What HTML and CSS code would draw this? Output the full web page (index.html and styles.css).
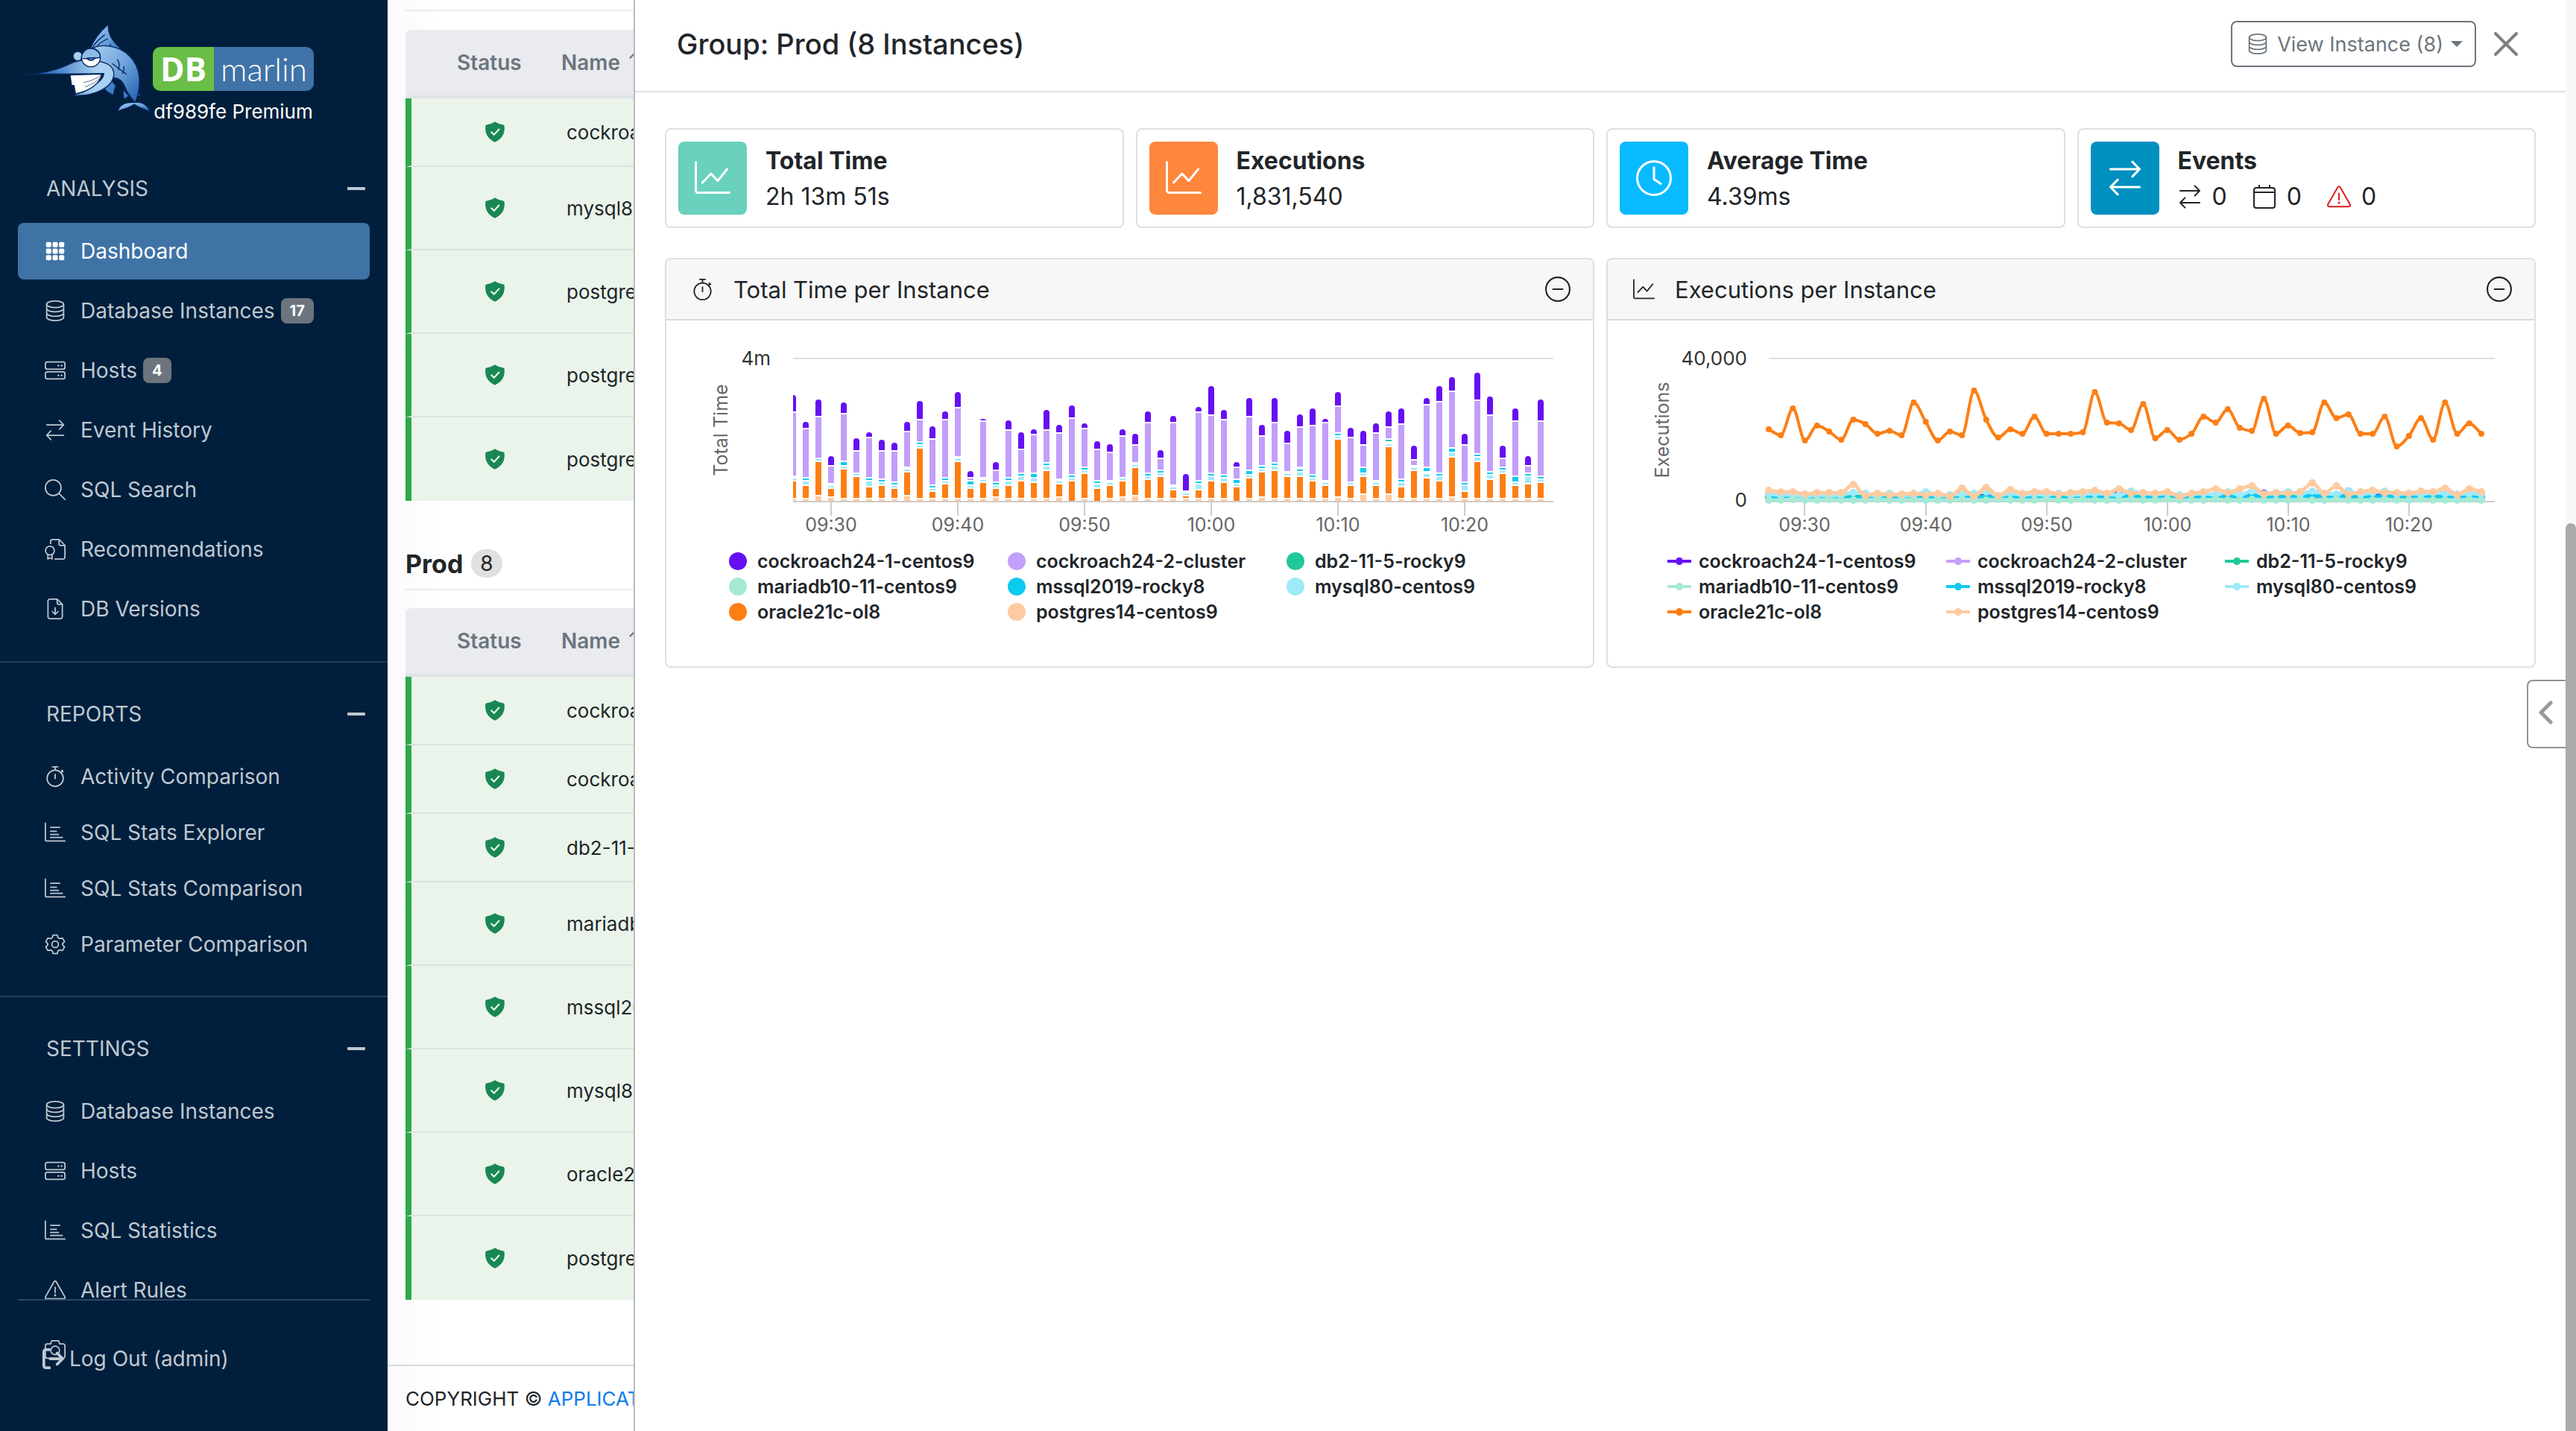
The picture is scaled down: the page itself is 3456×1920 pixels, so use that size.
FILE: index.html
```html
<!DOCTYPE html>
<html lang="en">
<head>
<meta charset="utf-8">
<title>DBmarlin - Dashboard</title>
<link rel="stylesheet" href="styles.css">
</head>
<body>
<svg class="sprite" aria-hidden="true">
  <symbol id="i-grid" viewBox="0 0 16 16"><g fill="currentColor"><rect x="1" y="1" width="4" height="4" rx="1"/><rect x="6" y="1" width="4" height="4" rx="1"/><rect x="11" y="1" width="4" height="4" rx="1"/><rect x="1" y="6" width="4" height="4" rx="1"/><rect x="6" y="6" width="4" height="4" rx="1"/><rect x="11" y="6" width="4" height="4" rx="1"/><rect x="1" y="11" width="4" height="4" rx="1"/><rect x="6" y="11" width="4" height="4" rx="1"/><rect x="11" y="11" width="4" height="4" rx="1"/></g></symbol>
  <symbol id="i-db" viewBox="0 0 16 16"><g fill="none" stroke="currentColor"><ellipse cx="8" cy="3" rx="6.5" ry="2.5"/><path d="M1.500 3v10c0 1.400 2.900 2.500 6.500 2.500s6.500-1.100 6.500-2.500V3M1.500 6.300C1.500 7.700 4.400 8.800 8 8.800s6.500-1.100 6.500-2.500M1.500 9.700c0 1.400 2.900 2.500 6.500 2.500s6.500-1.100 6.500-2.500"/></g></symbol>
  <symbol id="i-host" viewBox="0 0 16 16"><g fill="none" stroke="currentColor"><rect x=".5" y="1.500" width="15" height="5.500" rx="1.500"/><rect x=".5" y="9" width="15" height="5.500" rx="1.500"/></g><g fill="currentColor"><circle cx="10.500" cy="4.300" r=".7"/><circle cx="13" cy="4.300" r=".7"/><circle cx="10.500" cy="11.800" r=".7"/><circle cx="13" cy="11.800" r=".7"/></g></symbol>
  <symbol id="i-swap" viewBox="0 0 16 16"><path d="M1.500 4h13M11.300.700L14.500 4l-3.200 3.300M14.500 12h-13M4.700 8.700L1.500 12l3.200 3.300" fill="none" stroke="currentColor" stroke-linecap="round" stroke-linejoin="round"/></symbol>
  <symbol id="i-search" viewBox="0 0 16 16"><g fill="none" stroke="currentColor" stroke-linecap="round"><circle cx="6.500" cy="6.500" r="6"/><path d="M11 11l4.500 4.500"/></g></symbol>
  <symbol id="i-award" viewBox="0 0 16 16"><g fill="none" stroke="currentColor" stroke-linejoin="round"><path d="M4.500 4V2A1.500 1.500 0 0 1 6 .5h5l4.500 4.500v9a1.500 1.500 0 0 1-1.500 1.500H7.500"/><path d="M11 .5V4a1 1 0 0 0 1 1h3.500"/><circle cx="4" cy="9" r="3.400"/><path d="M2.400 12v3.500L4 14.500l1.600 1V12"/></g></symbol>
  <symbol id="i-file" viewBox="0 0 16 16"><g fill="none" stroke="currentColor" stroke-linecap="round" stroke-linejoin="round"><path d="M9.500.5H4A1.500 1.500 0 0 0 2.500 2v12A1.500 1.500 0 0 0 4 15.500h8a1.500 1.500 0 0 0 1.500-1.500V4.500z"/><path d="M9.500.5V3A1.500 1.500 0 0 0 11 4.500h2.500M8 7v5M5.800 10L8 12.200 10.200 10"/></g></symbol>
  <symbol id="i-watch" viewBox="0 0 16 16"><g fill="none" stroke="currentColor" stroke-linecap="round"><circle cx="8" cy="9.300" r="6.200"/><path d="M6 .5h4M8 .5V3M8 6.200v3.300M13 3.200l1 1M12.300 5l1.400-1.500"/></g></symbol>
  <symbol id="i-bars" viewBox="0 0 16 16"><path d="M.5.8v12.700a1 1 0 0 0 1 1h14M4.500 4h7M4.500 7h4.500M4.500 9.500h6M4.500 11.800h9" fill="none" stroke="currentColor" stroke-linecap="round"/></symbol>
  <symbol id="i-gear" viewBox="0 0 16 16"><g fill="none" stroke="currentColor" stroke-linejoin="round"><circle cx="8" cy="8" r="2.500"/><path d="M6.400.9h3.200l.6 2.100 1.300.7 2.100-.5 1.600 2.700-1.500 1.600v1l1.500 1.600-1.600 2.700-2.100-.5-1.300.7-.6 2.100H6.400l-.6-2.100-1.300-.7-2.100.5-1.600-2.700 1.500-1.600v-1L.8 5.900l1.600-2.700 2.100.5 1.300-.7z"/></g></symbol>
  <symbol id="i-alert" viewBox="0 0 16 16"><path d="M7.100 1.700a1 1 0 0 1 1.800 0l6.500 11.400a1 1 0 0 1-.9 1.500h-13a1 1 0 0 1-.9-1.500zM8 5.800v4.200" fill="none" stroke="currentColor" stroke-linecap="round"/><circle cx="8" cy="12" r=".8" fill="currentColor"/></symbol>
  <symbol id="i-camera" viewBox="0 0 16 16"><g fill="none" stroke="currentColor" stroke-linejoin="round"><path d="M4.500 3.500L5.500 1h5l1 2.500H14A1.500 1.500 0 0 1 15.500 5v8a1.500 1.500 0 0 1-1.500 1.500H2A1.500 1.500 0 0 1 .5 13V5A1.500 1.500 0 0 1 2 3.500z"/><circle cx="8" cy="8.500" r="3.300"/></g></symbol>
  <symbol id="i-logout" viewBox="0 0 16 16"><path d="M5.500 1.500H3A1.500 1.500 0 0 0 1.500 3v10A1.500 1.500 0 0 0 3 14.500h2.500M6 8h9M11 4l4 4-4 4" fill="none" stroke="currentColor" stroke-width="2" stroke-linecap="round" stroke-linejoin="round"/></symbol>
  <symbol id="i-graph" viewBox="0 0 16 16"><path d="M.5.800v12.700a1 1 0 0 0 1 1h14M3.500 10l3.800-4 3 3.200L14.500 4" fill="none" stroke="currentColor" stroke-linecap="round" stroke-linejoin="round"/></symbol>
  <symbol id="i-clock" viewBox="0 0 16 16"><g fill="none" stroke="currentColor" stroke-linecap="round" stroke-linejoin="round"><circle cx="8" cy="8" r="7.500"/><path d="M8 3.200V8.500l3 2"/></g></symbol>
  <symbol id="i-cal" viewBox="0 0 16 16"><g fill="none" stroke="currentColor" stroke-linecap="round"><rect x="1" y="2" width="14" height="13.500" rx="1.500"/><path d="M1 5h14M4.500 0v2M11.500 0v2"/></g></symbol>
  <symbol id="i-minus" viewBox="0 0 16 16"><g fill="none" stroke="currentColor" stroke-linecap="round"><circle cx="8" cy="8" r="7.500"/><path d="M5 8h6"/></g></symbol>
  <symbol id="i-shield" viewBox="0 0 16 16"><path d="M8 .2c2 1.200 4.200 2 6.400 2.400.6.100.9.500.9 1.100.4 5.500-1.700 9.600-7.300 12.100C2.400 13.300.3 9.200.7 3.700c0-.6.300-1 .9-1.100C3.800 2.200 6 1.400 8 .2z" fill="#198754"/><path d="M5.300 8.200l2 2 3.800-4.200" fill="none" stroke="#eef8f0" stroke-width="1.200" stroke-linecap="round" stroke-linejoin="round"/></symbol>
  <symbol id="i-up" viewBox="0 0 16 16"><path d="M5 15V1M1 5l4-4 4 4" fill="none" stroke="currentColor" stroke-width="1.500" stroke-linecap="round"/></symbol>
</svg>

<aside class="sidebar">
  <div class="brand">
    <svg class="fish" viewBox="0 0 555 420" aria-hidden="true">
      <defs>
        <linearGradient id="skin" x1="0" y1="0" x2="1" y2="1"><stop offset="0" stop-color="#a9d0f2"/><stop offset=".5" stop-color="#6fa3dc"/><stop offset="1" stop-color="#1f5fae"/></linearGradient>
        <linearGradient id="snout" x1="0" x2="1"><stop offset="0" stop-color="#06296a"/><stop offset=".35" stop-color="#3a78c4"/><stop offset=".8" stop-color="#a9d0f2"/></linearGradient>
      </defs>
      <g stroke="#06265c" stroke-width="4" stroke-linejoin="round">
        <path d="M303 136C318 98 343 66 376 38c-2 40 14 68 66 112l-40-10z" fill="url(#skin)"/>
        <path d="M312 132q18-30 50-52M328 130q10-18 46-34M380 130l6-12" fill="none"/>
        <path d="M385 258c-4 24-20 26-32 26 8 18 24 32 44 38 2-18 4-26 10-36zM436 300c-2 16 0 28 4 40l18-14zM485 290c4 14 12 26 24 36l-22-2z" fill="#3f80c8"/>
        <path d="M300 140c50-30 120-14 160 24 48 46 52 120 24 190-18-22-34-44-44-70-10-22-30-34-50-30l-60-60z" fill="url(#skin)"/>
        <path d="M414 388c6-26 28-38 66-36 32-4 54 12 64 38-22-12-42-16-64-30-20 14-42 18-66 28z" fill="url(#skin)"/>
        <circle cx="253" cy="166" r="19" fill="#a9d0f2"/>
        <path d="M20 240c70 0 140-14 200-42 40-20 90-20 132-8 30 8 48 24 46 52-4 46-72 88-166 82 18-10 40-8 58-22 34-22 66-40 68-66z" fill="url(#snout)"/>
        <path d="M222 242l128-4c-10 44-54 68-106 80l-6-34h-10z" fill="#fff"/>
        <path d="M276 272q40-6 78-34M282 290q40-14 60-36" fill="none" stroke-width="2"/>
        <path d="M392 196l58 44M412 178q14 20 4 44M438 206q4 16-6 30M396 254l12 8" fill="none"/>
        <circle cx="306" cy="171" r="38" fill="#fff"/>
        <path d="M268 175a38 38 0 0 1 76-4l-38 6z" fill="#8dbbe6"/>
        <path d="M291 174a16 13 0 0 0 31-2z" fill="#4e84bd"/>
      </g>
    </svg>
    <div class="brand-text">
      <div class="brand-mark"><span class="brand-db">DB</span><span class="brand-name">marlin</span></div>
      <div class="brand-plan">df989fe Premium</div>
    </div>
  </div>
  <nav class="nav">
    <section class="group">
      <button class="group-head" type="button">ANALYSIS<span class="dash"></span></button>
      <a class="item active" href="#"><svg><use href="#i-grid"/></svg>Dashboard</a>
      <a class="item" href="#"><svg><use href="#i-db"/></svg>Database Instances<span class="badge">17</span></a>
      <a class="item" href="#"><svg><use href="#i-host"/></svg>Hosts<span class="badge">4</span></a>
      <a class="item" href="#"><svg><use href="#i-swap"/></svg>Event History</a>
      <a class="item" href="#"><svg><use href="#i-search"/></svg>SQL Search</a>
      <a class="item" href="#"><svg><use href="#i-award"/></svg>Recommendations</a>
      <a class="item" href="#"><svg><use href="#i-file"/></svg>DB Versions</a>
    </section>
    <section class="group tight">
      <button class="group-head" type="button">REPORTS<span class="dash"></span></button>
      <a class="item" href="#"><svg><use href="#i-watch"/></svg>Activity Comparison</a>
      <a class="item" href="#"><svg><use href="#i-bars"/></svg>SQL Stats Explorer</a>
      <a class="item" href="#"><svg><use href="#i-bars"/></svg>SQL Stats Comparison</a>
      <a class="item" href="#"><svg><use href="#i-gear"/></svg>Parameter Comparison</a>
    </section>
    <section class="group">
      <button class="group-head" type="button">SETTINGS<span class="dash"></span></button>
      <a class="item" href="#"><svg><use href="#i-db"/></svg>Database Instances</a>
      <a class="item" href="#"><svg><use href="#i-host"/></svg>Hosts</a>
      <a class="item" href="#"><svg><use href="#i-bars"/></svg>SQL Statistics</a>
      <a class="item" href="#"><svg><use href="#i-alert"/></svg>Alert Rules</a>
      <a class="item" href="#" aria-label="Snapshots"><svg><use href="#i-camera"/></svg></a>
    </section>
  </nav>
  <div class="side-foot"><a class="logout" href="#"><svg><use href="#i-logout"/></svg>Log Out (admin)</a></div>
</aside>

<main class="main">
  <section class="db-group first">
    <table class="list">
      <colgroup><col class="c-status"><col></colgroup>
      <thead><tr><th>Status</th><th>Name <svg class="sort"><use href="#i-up"/></svg></th></tr></thead>
      <tbody>
        <tr class="short"><td><svg><use href="#i-shield"/></svg></td><td>cockroach24-2-node1</td></tr>
        <tr><td><svg><use href="#i-shield"/></svg></td><td>mysql80-centos9</td></tr>
        <tr><td><svg><use href="#i-shield"/></svg></td><td>postgres13-centos9</td></tr>
        <tr><td><svg><use href="#i-shield"/></svg></td><td>postgres14-centos9</td></tr>
        <tr><td><svg><use href="#i-shield"/></svg></td><td>postgres15-centos9</td></tr>
      </tbody>
    </table>
  </section>
  <section class="db-group">
    <h2 class="group-title">Prod <span class="count">8</span></h2>
    <table class="list">
      <colgroup><col class="c-status"><col></colgroup>
      <thead><tr><th>Status</th><th>Name <svg class="sort"><use href="#i-up"/></svg></th></tr></thead>
      <tbody>
        <tr class="short"><td><svg><use href="#i-shield"/></svg></td><td>cockroach24-1-centos9</td></tr>
        <tr class="short"><td><svg><use href="#i-shield"/></svg></td><td>cockroach24-2-cluster</td></tr>
        <tr class="short"><td><svg><use href="#i-shield"/></svg></td><td>db2-11-5-rocky9</td></tr>
        <tr><td><svg><use href="#i-shield"/></svg></td><td>mariadb10-11-centos9</td></tr>
        <tr><td><svg><use href="#i-shield"/></svg></td><td>mssql2019-rocky8</td></tr>
        <tr><td><svg><use href="#i-shield"/></svg></td><td>mysql80-centos9</td></tr>
        <tr><td><svg><use href="#i-shield"/></svg></td><td>oracle21c-ol8</td></tr>
        <tr><td><svg><use href="#i-shield"/></svg></td><td>postgres14-centos9</td></tr>
      </tbody>
    </table>
  </section>
  <footer class="foot">COPYRIGHT © <a href="#">APPLICATION PERFORMANCE LTD</a></footer>
</main>

<section class="panel" aria-labelledby="panel-title">
  <header class="panel-head">
    <h1 id="panel-title">Group: Prod (8 Instances)</h1>
    <button class="view" type="button"><svg><use href="#i-db"/></svg>View Instance (8)<span class="caret"></span></button>
    <button class="close" type="button" aria-label="Close"><svg viewBox="0 0 32 32"><path d="M2 2l28 28M30 2L2 30" stroke="#808080" stroke-width="4" stroke-linecap="round"/></svg></button>
  </header>
  <div class="stats">
    <article class="stat"><div class="tile teal"><svg><use href="#i-graph"/></svg></div><div class="figure"><h3>Total Time</h3><p>2h 13m 51s</p></div></article>
    <article class="stat"><div class="tile orange"><svg><use href="#i-graph"/></svg></div><div class="figure"><h3>Executions</h3><p>1,831,540</p></div></article>
    <article class="stat"><div class="tile sky"><svg><use href="#i-clock"/></svg></div><div class="figure"><h3>Average Time</h3><p>4.39ms</p></div></article>
    <article class="stat"><div class="tile blue"><svg><use href="#i-swap"/></svg></div><div class="figure"><h3>Events</h3>
      <p class="events"><span><svg><use href="#i-swap"/></svg>0</span><span><svg><use href="#i-cal"/></svg>0</span><span><svg class="red"><use href="#i-alert"/></svg>0</span></p></div></article>
  </div>
  <div class="charts">
    <article class="card">
      <header class="card-head"><svg><use href="#i-watch"/></svg><h2>Total Time per Instance</h2><button type="button" aria-label="Collapse"><svg><use href="#i-minus"/></svg></button></header>
      <svg class="plot" viewBox="0 0 1243 300">
        <path class="gridline" d="M170 51H1190"/>
        <g id="bars"></g>
        <path class="axis" d="M170 243H1190M221 243v19M391 243v19M561 243v19M731 243v19M901 243v19M1071 243v19"/>
        <text class="val" x="140" y="60" text-anchor="end">4m</text>
        <text class="name" x="74" y="147" text-anchor="middle" transform="rotate(-90 74 147)" dy="8">Total Time</text>
        <g class="ticks" text-anchor="middle"><text x="221" y="283">09:30</text><text x="391" y="283">09:40</text><text x="561" y="283">09:50</text><text x="731" y="283">10:00</text><text x="901" y="283">10:10</text><text x="1071" y="283">10:20</text></g>
      </svg>
      <ul class="legend dots">
        <li class="s1">cockroach24-1-centos9</li><li class="s2">cockroach24-2-cluster</li><li class="s3">db2-11-5-rocky9</li>
        <li class="s4">mariadb10-11-centos9</li><li class="s5">mssql2019-rocky8</li><li class="s6">mysql80-centos9</li>
        <li class="s7">oracle21c-ol8</li><li class="s8">postgres14-centos9</li>
      </ul>
    </article>
    <article class="card">
      <header class="card-head"><svg><use href="#i-graph"/></svg><h2>Executions per Instance</h2><button type="button" aria-label="Collapse"><svg><use href="#i-minus"/></svg></button></header>
      <svg class="plot" viewBox="0 0 1243 300">
        <path class="gridline" d="M216 51H1190"/>
        <path class="axis" d="M216 243H1190M264 243v19M427 243v19M589 243v19M751 243v19M913 243v19M1075 243v19"/>
        <g id="lines"></g>
        <text class="val" x="187" y="60" text-anchor="end">40,000</text>
        <text class="val" x="187" y="250" text-anchor="end">0</text>
        <text class="name" x="74" y="147" text-anchor="middle" transform="rotate(-90 74 147)" dy="8">Executions</text>
        <g class="ticks" text-anchor="middle"><text x="264" y="283">09:30</text><text x="427" y="283">09:40</text><text x="589" y="283">09:50</text><text x="751" y="283">10:00</text><text x="913" y="283">10:10</text><text x="1075" y="283">10:20</text></g>
      </svg>
      <ul class="legend marks">
        <li class="s1">cockroach24-1-centos9</li><li class="s2">cockroach24-2-cluster</li><li class="s3">db2-11-5-rocky9</li>
        <li class="s4">mariadb10-11-centos9</li><li class="s5">mssql2019-rocky8</li><li class="s6">mysql80-centos9</li>
        <li class="s7">oracle21c-ol8</li><li class="s8">postgres14-centos9</li>
      </ul>
    </article>
  </div>
</section>
<button class="drawer" type="button" aria-label="Open drawer"><svg viewBox="0 0 20 32"><path d="M17 3L4 16l13 13" fill="none" stroke="#999" stroke-width="5" stroke-linecap="round" stroke-linejoin="round"/></svg></button>
<div class="scroll"><div class="thumb"></div></div>
<script src="app.js"></script>
</body>
</html>
```
FILE: styles.css
```css
* { box-sizing: border-box; }
body {
  margin: 0;
  height: 100vh;
  overflow: hidden;
  display: flex;
  position: relative;
  font-family: Inter, "Liberation Sans", sans-serif;
  font-size: 28px;
  color: #212529;
  background: #fff;
}
h1, h2, h3, p, ul { margin: 0; padding: 0; }
button { font: inherit; color: inherit; background: none; border: 0; padding: 0; text-align: left; }
a { text-decoration: none; }
.sprite { position: absolute; width: 0; height: 0; }

/* Sidebar */
.sidebar {
  flex: 0 0 520px;
  height: 100%;
  position: relative;
  overflow: hidden;
  background: #011f3c;
  color: #bfc8d1;
}
.brand { display: flex; height: 229px; padding: 20px 0 0 20px; }
.fish { width: 185px; height: 140px; }
.brand-text { padding-top: 43px; color: #fff; }
.brand-mark { display: flex; width: 216px; height: 59px; color: #fff; line-height: 59px; text-align: center; font-family: "Open Sans", sans-serif; }
.brand-db { width: 82px; border-radius: 10px 0 0 10px; background: #69be45; font-size: 44px; font-weight: 700; }
.brand-name { flex: 1; border-radius: 0 10px 10px 0; background: #4073a7; font-family: Lato, sans-serif; font-size: 44px; font-weight: 300; }
.brand-plan { margin-top: 12px; font-size: 26px; line-height: 32px; text-align: center; white-space: nowrap; }
.group { padding: 45px 24px 32px; border-bottom: 2px solid #223c57; }
.group:first-child { padding-top: 0; }
.group:last-child { border-bottom: 0; }
.group-head { display: flex; align-items: center; justify-content: space-between; width: 100%; height: 48px; margin-bottom: 22px; padding: 0 6px 0 38px; }
.dash { width: 24px; height: 4px; border-radius: 1px; background: #bfc8d1; }
.item { display: flex; align-items: center; height: 76px; margin-bottom: 4px; padding-left: 36px; border-radius: 8px; color: inherit; white-space: nowrap; }
.item:last-child { margin-bottom: 0; }
.tight .item { height: 75px; margin-bottom: 0; }
.item svg { width: 28px; height: 28px; margin-right: 20px; }
.item.active { background: #4073a5; color: #fff; }
.badge { margin-left: 8px; padding: 0 12px; border-radius: 8px; background: #6c757d; color: #fff; font-size: 20px; font-weight: 700; line-height: 34px; }
.side-foot { position: absolute; left: 24px; right: 24px; bottom: 0; height: 177px; border-top: 2px solid #2b4561; padding: 54px 0 0 32px; }
.logout { display: flex; align-items: center; gap: 7px; height: 48px; color: inherit; }
.logout svg { width: 30px; height: 30px; }

/* Instance lists */
.main { flex: 1; min-width: 0; overflow: hidden; background: linear-gradient(90deg, #fafafd, #fff 70px); }
.db-group { margin-left: 24px; }
.db-group.first { margin-top: 13px; padding-top: 25px; border-top: 2px solid #e9eaec; }
.group-title { display: flex; align-items: center; gap: 11px; height: 120px; margin-bottom: 24px; padding-top: 50px; border-bottom: 2px solid #e9eaec; font-size: 34px; font-weight: 700; }
.count { padding: 0 12px; border-radius: 19px; background: #e0e0e0; font-size: 28px; font-weight: 400; line-height: 38px; }
.list { width: 100%; table-layout: fixed; border-spacing: 0; }
.c-status { width: 185px; }
.list th { height: 92px; padding: 0 0 0 24px; text-align: left; font-weight: 600; color: #6c757d; background: #e9ebef; border-bottom: 4px solid #dee2e6; white-space: nowrap; }
.list th:first-child { padding-left: 69px; border-top-left-radius: 8px; }
.sort { width: 24px; height: 24px; margin-left: 5px; }
.list td { height: 112px; padding: 0 0 0 31px; background: #eaf4ea; border-bottom: 2px solid #dbe2e2; font-size: 26px; white-space: nowrap; }
.list .short td { height: 92px; }
.list td:first-child { padding-left: 98px; border-left: 8px solid #2fa84a; }
.list tr:last-child td { border-bottom: 0; }
.list td svg { display: block; width: 28px; height: 28px; }
.foot { margin-top: 87px; padding: 26px 24px; border-top: 2px solid #d9dbde; font-size: 26px; line-height: 36px; white-space: nowrap; }
.foot a { color: #0d7bef; }

/* Slide-over */
.panel { position: absolute; top: 0; bottom: 0; right: 14px; width: 75vw; background: #fff; border-left: 2px solid #b9bbbd; }
.panel-head { display: flex; align-items: center; height: 124px; padding: 0 64px 4px 56px; border-bottom: 2px solid #dee2e6; }
.panel-head h1 { flex: 1; font-size: 38px; font-weight: 500; line-height: 48px; }
.view { display: flex; align-items: center; height: 62px; padding: 0 16px 0 20px; border: 2px solid #6c757d; border-radius: 8px; color: #6c757d; font-size: 27px; }
.view svg { width: 28px; height: 28px; margin-right: 12px; }
.caret { margin-left: 10px; border: 8px solid transparent; border-top-color: #6c757d; border-bottom: 0; }
.close { margin-left: 24px; }
.close svg { display: block; width: 32px; height: 32px; }
.stats { display: grid; grid-template-columns: repeat(4, 1fr); gap: 16px; padding: 48px 40px 40px; }
.stat { display: flex; align-items: center; gap: 25px; height: 134px; padding: 0 16px; border: 2px solid #dfdfdf; border-radius: 8px; }
.tile { display: flex; align-items: center; justify-content: center; width: 92px; height: 98px; border-radius: 8px; color: #fff; }
.tile svg { width: 48px; height: 48px; }
.teal { background: #69d1bd; }
.orange { background: #ff863d; }
.sky { background: #08baff; }
.blue { background: #0090c0; }
.figure { padding-top: 2px; }
.stat h3, .stat p { font-size: 32px; line-height: 48px; }
.stat h3 { font-weight: 700; }
.events { display: flex; gap: 34px; }
.events span { display: flex; align-items: center; gap: 14px; }
.events svg { width: 32px; height: 32px; }
.red { color: #dc1c1c; }
.charts { display: grid; grid-template-columns: 1fr 1fr; gap: 16px; padding: 0 40px; }
.card { border: 2px solid #dfdfdf; border-radius: 8px; padding-bottom: 56px; overflow: hidden; }
.card-head { display: flex; align-items: center; height: 82px; padding: 0 30px 0 34px; background: #f7f7f7; border-bottom: 2px solid #dbdbdb; }
.card-head svg { width: 29px; height: 29px; }
.card-head h2 { flex: 1; margin-left: 27px; font-size: 31px; font-weight: 400; }
.card-head button svg { display: block; width: 34px; height: 34px; }
.plot { display: block; width: 100%; height: auto; }
.gridline { stroke: #e0e0e0; stroke-width: 2; }
.axis { stroke: #ccc; stroke-width: 2; }
.val { font-size: 26px; fill: #333; }
.name { font-size: 25px; fill: #666; }
.ticks { font-size: 25px; fill: #666; }
.legend { display: grid; grid-template-columns: repeat(3, 374px); padding: 6px 0 0 84px; list-style: none; font-size: 25px; font-weight: 600; line-height: 34px; }
.marks { padding-left: 80px; }
.legend li { display: flex; align-items: center; white-space: nowrap; }
.dots li::before { content: ""; width: 24px; height: 24px; margin-right: 14px; border-radius: 50%; background: var(--c); }
.marks li::before { content: ""; width: 32px; height: 10px; margin-right: 10px; background: radial-gradient(circle at center, var(--c) 5px, transparent 5px), linear-gradient(transparent 3px, var(--c) 3px 7px, transparent 7px); }
.s1 { --c: #6610f2; }
.s2 { --c: #c29ffa; }
.s3 { --c: #20c997; }
.s4 { --c: #a6e9d5; }
.s5 { --c: #0dcaf0; }
.s6 { --c: #9eeaf9; }
.s7 { --c: #fd7e14; }
.s8 { --c: #fecba1; }
.drawer { position: absolute; top: 912px; right: 14px; width: 52px; height: 92px; display: flex; align-items: center; justify-content: center; padding: 0 4px 4px 0; border: 2px solid #939393; border-right: 0; border-radius: 8px 0 0 8px; background: #fff; }
.drawer svg { width: 20px; height: 32px; }
.scroll { position: absolute; top: 0; bottom: 0; right: 0; width: 14px; padding-top: 702px; background: #f8f8f8; }
.thumb { height: 100%; border-radius: 7px 7px 0 0; background: #aaa; }
```
FILE: app.js
```js
const NS = 'http://www.w3.org/2000/svg';
const color = { c1: '#6610f2', c2: '#c29ffa', db2: '#20c997', maria: '#a6e9d5', mssql: '#0dcaf0', mysql: '#9eeaf9', oracle: '#fd7e14', pg: '#fecba1' };
const add = (parent, tag, attrs) => {
  const el = document.createElementNS(NS, tag);
  for (const k in attrs) el.setAttribute(k, attrs[k]);
  parent.appendChild(el);
};

// One entry per minute, in 2px steps from the top of the plot:
// c1 top, c1 end, c2 end, mssql top, mssql end, mysql top, mysql end, oracle top, oracle end
const minutes = [
  [45,56,99,0,0,101,102,103,114],[63,67,100,101,102,103,105,106,114],[48,59,87,0,0,88,89,90,112],[86,92,104,0,0,106,107,108,113],
  [50,57,89,90,92,93,94,95,114],[74,82,97,0,0,98,99,100,114],[70,73,100,101,102,103,106,107,114],[75,82,101,102,103,104,105,106,114],
  [77,82,103,104,105,106,107,108,114],[63,69,93,0,0,95,96,97,112],[49,61,76,77,78,79,80,81,114],[66,74,105,106,107,108,109,110,114],
  [56,61,100,101,102,103,104,105,114],[43,53,86,0,0,88,89,90,114],[96,100,102,103,105,106,107,108,114],[61,62,100,0,0,102,103,104,114],
  [90,95,103,104,105,106,107,108,113],[62,68,100,101,102,103,105,106,114],[70,81,97,98,99,100,102,103,114],[68,71,97,98,100,101,103,104,114],
  [55,68,90,91,92,93,95,96,114],[65,70,101,0,0,103,104,105,113],[52,60,98,99,100,101,102,103,116],[64,67,93,94,95,96,97,98,114],
  [76,81,102,103,104,105,107,108,116],[78,83,102,0,0,104,105,106,114],[68,72,100,0,0,101,102,103,113],[71,78,90,0,0,92,93,94,112],
  [56,63,97,98,99,100,101,102,114],[82,87,95,96,97,98,99,100,114],[59,63,105,0,0,107,108,109,114],[98,109,109,0,0,111,112,113,114],
  [53,56,102,103,104,105,108,109,114],[39,58,97,98,99,100,102,103,114],[55,61,98,99,100,101,103,104,114],[90,93,101,102,104,105,106,107,116],
  [47,59,95,96,98,99,100,101,114],[65,72,92,93,94,95,96,97,113],[47,63,90,91,92,93,95,96,114],[69,77,96,0,0,98,99,100,114],
  [58,66,93,95,96,97,99,100,114],[54,65,98,99,100,101,102,103,114],[61,63,102,0,0,104,105,106,114],[43,52,70,71,72,73,74,75,113],
  [67,73,103,0,0,104,105,106,114],[69,78,93,94,97,98,99,100,111],[64,70,102,0,0,104,105,106,114],[56,66,74,75,76,78,79,80,111],
  [54,64,101,102,103,104,106,107,114],[79,88,92,0,0,94,95,96,114],[47,51,93,94,96,98,100,101,114],[39,49,97,98,99,100,102,103,114],
  [33,42,80,81,83,84,86,87,113],[71,78,103,104,105,106,109,110,114],[30,48,84,85,86,87,89,90,114],[46,58,96,97,98,99,101,102,114],
  [79,87,93,94,95,96,97,98,114],[54,62,99,100,103,104,105,106,114],[86,92,97,98,99,100,104,105,114],[48,62,99,100,101,102,103,104,114]
];
const bars = document.getElementById('bars');
minutes.forEach((m, i) => {
  const full = i > 0;
  const x = full ? 166 + i * 17 : 170;
  const w = full ? 8 : 4;
  const y = v => v * 2 + 10;
  const seg = (a, b, c) => { if (b > a) add(bars, 'rect', { x, y: y(a), width: w, height: (b - a) * 2, fill: c }); };
  const r = Math.min(4, (m[1] - m[0]) * 2);
  const top = y(m[0]), end = y(m[1]);
  add(bars, 'path', { fill: color.c1, d: full
    ? `M${x} ${end}V${top + r}a4 ${r} 0 0 1 8 0V${end}z`
    : `M${x} ${end}V${top}a4 4 0 0 1 4 4V${end}z` });
  seg(m[1] + 1, m[2], color.c2);
  seg(m[3], m[4], i === 47 ? color.db2 : color.mssql);
  seg(m[5], m[6], color.mysql);
  seg(m[7], m[8], color.oracle);
  seg(m[8] + 1, 116, color.pg);
});

// Pixel heights below the plot top, one per minute
const series = [
  ['c1', '225 227 226 227 228 227 228 227 228 227 228 228 227 228 227 228 221 228 220 228 227 228 226 227 228 227 228 227 226 222 228 227 228 227 228 227 228 224 223 228 222 222 228 227 228 227 226 228 219 228 227 222 228 227 228 227 228 227 225 226'],
  ['c2', '229 229 229 229 230 229 229 229 230 229 229 229 229 229 230 229 228 229 228 229 229 229 229 229 230 229 229 229 229 229 229 230 229 229 229 229 229 229 230 229 228 229 229 229 229 229 229 229 228 229 229 229 229 230 229 229 229 229 229 229'],
  ['db2', '227 227 226 227 227 228 227 226 227 227 228 227 226 227 228 227 227 226 227 228 227 226 227 227 228 227 226 227 227 228 227 227 226 228 227 226 227 227 226 225 227 228 227 227 226 227 223 227 226 227 227 228 227 226 227 226 227 225 223 224'],
  ['mssql', '226 227 226 228 227 229 228 229 227 228 229 229 227 229 228 229 227 228 228 228 229 226 229 226 228 227 226 227 226 227 225 227 228 225 228 227 226 227 224 228 225 227 226 227 226 225 226 227 225 226 227 225 226 225 226 225 227 226 227 225'],
  ['mysql', '223 224 224 226 224 225 224 221 222 225 222 225 224 220 225 224 223 222 220 225 222 224 223 224 222 224 223 222 223 224 219 222 223 222 224 223 222 224 220 224 219 223 222 220 223 219 222 223 219 223 221 219 223 222 223 221 222 223 222 223'],
  ['maria', '231 231 230 231 231 230 231 231 231 230 231 231 230 231 231 231 230 231 231 230 231 231 231 230 231 231 230 231 231 231 230 231 231 230 231 231 231 230 231 231 230 231 231 231 230 231 231 230 231 231 231 230 231 231 230 231 231 231 230 231'],
  ['oracle', '136 144 108 151 131 139 150 123 129 142 138 144 100 126 151 139 144 84 123 147 136 142 119 142 142 142 140 86 127 128 137 102 148 137 150 142 119 127 109 134 138 95 142 131 141 140 100 121 116 142 142 119 159 145 121 150 100 142 128 142'],
  ['pg', '218 220 220 223 221 221 221 210 225 222 224 223 222 224 222 226 215 226 214 225 217 222 220 220 223 221 220 218 222 216 222 221 222 220 226 222 220 216 221 216 212 223 221 222 220 208 222 212 223 220 218 221 221 222 219 220 215 224 216 220']
];
const lines = document.getElementById('lines');
const step = 956 / 59;
// Monotone cubic through the points, so peaks stay on the markers
function smooth(p) {
  const n = p.length, s = [], t = [];
  for (let i = 0; i < n - 1; i++) s.push((p[i + 1][1] - p[i][1]) / step);
  for (let i = 0; i < n; i++) {
    const a = s[i - 1], b = s[i];
    t.push(a === undefined ? b : b === undefined ? a : a * b <= 0 ? 0 : 2 * a * b / (a + b));
  }
  let d = `M${p[0]}`;
  for (let i = 0; i < n - 1; i++) {
    const h = step / 3;
    d += `C${p[i][0] + h} ${p[i][1] + t[i] * h} ${p[i + 1][0] - h} ${p[i + 1][1] - t[i + 1] * h} ${p[i + 1]}`;
  }
  return d;
}
series.forEach(([name, text]) => {
  const pts = text.split(' ').map((v, i) => [216 + i * step, +v + 10]);
  add(lines, 'path', { d: smooth(pts), fill: 'none', stroke: color[name], 'stroke-width': name === 'oracle' ? 4 : 5 });
  pts.forEach(([cx, cy]) => add(lines, 'circle', { cx, cy, r: name === 'oracle' ? 4 : 5, fill: color[name] }));
});
```
